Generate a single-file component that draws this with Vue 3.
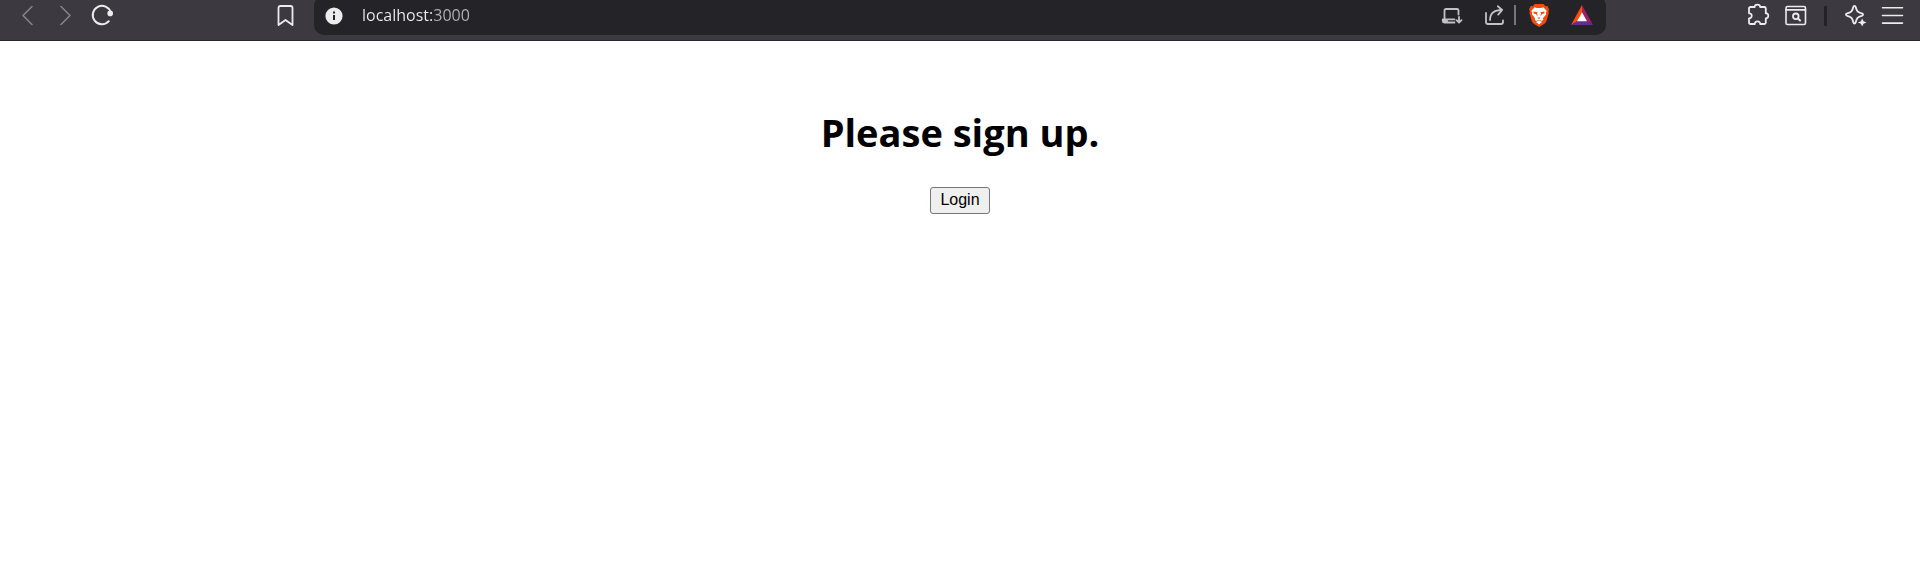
<script setup>
import { ref } from 'vue'

const address = ref('localhost:3000')
</script>

<template>
  <div class="browser">
    <header class="toolbar">
      <nav class="side side-left" aria-label="Navigation">
        <div class="group">
          <button class="icon dim" type="button" aria-label="Back">
            <svg viewBox="0 0 30 30"><path d="M19 6.5 10 15.5l9 9" /></svg>
          </button>
          <button class="icon dim" type="button" aria-label="Forward">
            <svg viewBox="0 0 30 30"><path d="M10 6.5l9 9-9 9" /></svg>
          </button>
          <button class="icon" type="button" aria-label="Reload">
            <svg viewBox="0 0 30 30">
              <path class="thick" d="M19.800 21.200A9.200 9.200 0 1 1 21.800 12.500" />
              <circle class="solid" cx="21.200" cy="13.400" r="2.800" />
            </svg>
          </button>
        </div>
        <button class="icon" type="button" aria-label="Bookmark this page">
          <svg viewBox="0 0 30 30"><path class="medium" d="M9.500 6h10q2 0 2 2v17l-7-5-7 5V8q0-2 2-2z" /></svg>
        </button>
      </nav>

      <div class="address">
        <button class="icon" type="button" aria-label="Site information">
          <svg viewBox="0 0 30 30">
            <circle class="solid" cx="15" cy="16" r="8.600" />
            <path class="cut" d="M14 12.400h2M15 15v5" />
          </svg>
        </button>
        <input v-model="address" class="url" type="text" aria-label="Address" spellcheck="false" />
        <button class="icon soft" type="button" aria-label="Install app">
          <svg viewBox="0 0 30 30">
            <path class="medium" d="M21.500 14.500V10.500q0-1.500-1.500-1.500H9Q7.500 9 7.500 10.500V19M17.500 19.300H5.800V21q0 1.500 1.500 1.500H17.500M6 21h4" />
            <path class="medium" d="M22 17v5.500M19.500 20.200l2.500 2.500 2.500-2.500" />
          </svg>
        </button>
        <button class="icon soft share" type="button" aria-label="Share">
          <svg viewBox="0 0 30 30">
            <path class="medium" d="M6 13v9q0 2 2 2h13q2 0 2-2v-1.500" />
            <path class="medium" d="M10 20c0-6.500 4-10 12-10M17.800 6.300l4.400 3.700-4 4.600" />
          </svg>
        </button>
        <span class="rule"></span>
        <button class="icon" type="button" aria-label="Brave Shields">
          <svg viewBox="0 0 30 30">
            <path fill="#f64a0b" d="M10.800 4h8.600l2 2.200 2-.1 1.700 3.200-.7 2 .4 1.600-2.500 8.500-1.800 2.400-5.400 3.300-5.400-3.300-1.800-2.400L5.400 13l.4-1.700-.8-2L6.800 6l2 .2z" />
            <path fill="#fff" d="m10.600 7.300 2.400.7h4l2.400-.7 3.300 3.800-.9 1.500.4 1.700-3.300 4 .4 1.500-1.500 1.200-2.800-1.300-2.800 1.300-1.500-1.200.4-1.500-3.300-4 .4-1.700-.9-1.500zM15 20.300l3 1.600-3 2.500-3-2.500z" />
            <path fill="#f64a0b" d="m9.600 11.500 4 .7-.7 1.600.7 1.400-.6.900-.9-2-2.500-.5zM20.400 11.500l-4 .7.700 1.600-.7 1.400.6.900.9-2 2.500-.5zM13.200 17.500h3.600L15 19z" />
          </svg>
        </button>
        <button class="icon" type="button" aria-label="Brave Rewards">
          <svg viewBox="0 0 30 30">
            <path fill="#ff4a0d" d="M15 5 4 25l6.400-3.800L15 12.500z" />
            <path fill="#9e1f63" d="M15 5v7.500l4.800 8.700L26 25z" />
            <path fill="#662d91" d="M4 25h22l-6.200-4h-9.400z" />
            <path fill="#fff" d="m15 12.300-5 8.900h10z" />
          </svg>
        </button>
      </div>

      <nav class="side side-right" aria-label="Browser tools">
        <button class="icon" type="button" aria-label="Extensions">
          <svg viewBox="0 0 30 30">
            <path class="medium" d="M5 8.500q0-1.500 1.500-1.500h4.200c-.2-1.400 1-2.400 2.700-2.400s2.900 1 2.700 2.400h4.200q1.500 0 1.500 1.500v4.800c1.500-.2 2.500.9 2.500 2.500s-1 2.700-2.500 2.500v4.200q0 1.500-1.500 1.500h-4.100c.1-1.600-1-2.700-2.700-2.700s-2.800 1.100-2.700 2.700H6.500Q5 24 5 22.500v-4.200c1.700.1 2.700-1 2.700-2.500S6.700 13.200 5 13.300z" />
          </svg>
        </button>
        <button class="icon" type="button" aria-label="Search tabs">
          <svg viewBox="0 0 30 30">
            <rect x="5" y="6.500" width="19.500" height="18" rx="1.500" />
            <path d="M5 9.900h19.500" />
            <circle class="medium" cx="14.800" cy="16.300" r="2.800" />
            <path class="thick" d="m17 18.500 2 2" />
          </svg>
        </button>
        <span class="rule rule-dark"></span>
        <button class="icon" type="button" aria-label="Leo AI">
          <svg viewBox="0 0 30 30">
            <path class="medium" d="M13.500 5.800c.7 0 1 .4 1.200 1.200.9 4 2.100 5.300 6.100 6.300 1.700.5 1.700 2.100 0 2.600-4 1-5.200 2.300-6.100 6.300-.4 1.700-2 1.700-2.400 0-.9-4-2.100-5.300-6.100-6.300-1.700-.5-1.700-2.100 0-2.600 4-1 5.200-2.300 6.100-6.300.2-.8.5-1.200 1.200-1.200z" />
            <path class="solid" d="m21.200 18.500 1.300 2.700 3 1.300-3 1.300-1.300 2.700-1.300-2.700-3-1.300 3-1.300z" />
          </svg>
        </button>
        <button class="icon" type="button" aria-label="Menu">
          <svg viewBox="0 0 30 30"><path d="M4.500 7.700h20M4.500 15.500h20M4.500 23.100h20" /></svg>
        </button>
      </nav>
    </header>

    <main class="page">
      <h1>Please sign up.</h1>
      <button class="login" type="button">Login</button>
    </main>
  </div>
</template>

<style>
body {
  margin: 0;
  background: #fff;
}
</style>

<style scoped>
.browser {
  font-family: "Segoe UI", "Open Sans", "Noto Sans", sans-serif;
}

.toolbar {
  display: flex;
  align-items: flex-start;
  box-sizing: border-box;
  height: 41px;
  overflow: hidden;
  background: #3c3a40;
  border-bottom: 1px solid #29282c;
}

.side {
  display: flex;
  box-sizing: border-box;
  width: 314px;
  flex: none;
}

.side-left {
  justify-content: space-between;
  padding: 0 13px;
}

.side-right {
  justify-content: flex-end;
  gap: 7px;
  padding-right: 12px;
}

.group {
  display: flex;
  gap: 8px;
}

.icon {
  flex: none;
  width: 30px;
  height: 30px;
  padding: 0;
  border: 0;
  background: none;
  color: #ececee;
}

.icon svg {
  display: block;
  width: 30px;
  height: 30px;
  fill: none;
  stroke: currentColor;
  stroke-width: 1.6;
  stroke-linecap: round;
  stroke-linejoin: round;
}

.icon svg path[fill] {
  stroke: none;
}

.icon .medium {
  stroke-width: 1.8;
}

.icon .thick {
  stroke-width: 2;
}

.icon .solid {
  fill: currentColor;
  stroke: none;
}

.icon .cut {
  stroke: #242328;
  stroke-width: 2;
  stroke-linecap: butt;
}

.dim {
  color: #858488;
}

.soft {
  color: #c2c1c5;
}

.address {
  display: flex;
  flex: 1;
  gap: 13px;
  box-sizing: border-box;
  min-width: 0;
  height: 39px;
  margin-top: -4px;
  padding: 4px 9px 0 5px;
  border-radius: 10px;
  background: #242328;
}

.url {
  flex: 1;
  min-width: 0;
  height: 30px;
  padding: 0;
  border: 0;
  outline: 0;
  background: linear-gradient(to right, #f0f0f2 70px, #b4b3b8 70px);
  background-clip: text;
  color: transparent;
  font-family: inherit;
  font-size: 16px;
  line-height: 30px;
}

.rule {
  flex: none;
  width: 2px;
  height: 20px;
  margin: 5px -5px 0 0;
  background: #77767b;
}

.share {
  margin-right: -9px;
}

.rule-dark {
  width: 3px;
  margin: 6px 7px 0 6px;
  border-radius: 1px;
  background: #222125;
}

.page {
  display: flex;
  flex-direction: column;
  align-items: center;
  gap: 28px;
  padding-top: 64px;
}

h1 {
  margin: 0;
  color: #000;
  font-size: 38px;
  font-weight: 700;
  line-height: 54px;
}

.login {
  height: 27px;
  padding: 0 9px 2px;
  border: 1px solid #767676;
  border-radius: 3px;
  background: #efefef;
  color: #000;
  font-family: Arial, "Liberation Sans", sans-serif;
  font-size: 16px;
}
</style>
